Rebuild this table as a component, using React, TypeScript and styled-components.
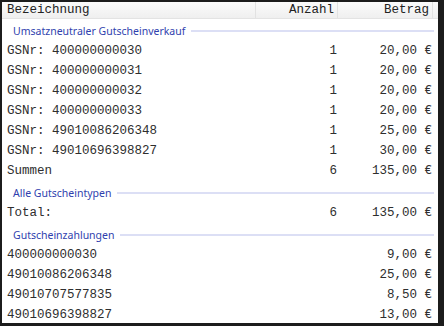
import styled, { createGlobalStyle } from "styled-components";

const GlobalStyle = createGlobalStyle`
  html, body {
    margin: 0;
    padding: 0;
    background: #1c1c1c;
  }
  * {
    box-sizing: border-box;
  }
`;

type Row = { name: string; anzahl?: string; betrag: string };
type Group = { title: string; rows: Row[] };

const groups: Group[] = [
  {
    title: "Umsatzneutraler Gutscheinverkauf",
    rows: [
      { name: "GSNr: 400000000030", anzahl: "1", betrag: "20,00 €" },
      { name: "GSNr: 400000000031", anzahl: "1", betrag: "20,00 €" },
      { name: "GSNr: 400000000032", anzahl: "1", betrag: "20,00 €" },
      { name: "GSNr: 400000000033", anzahl: "1", betrag: "20,00 €" },
      { name: "GSNr: 49010086206348", anzahl: "1", betrag: "25,00 €" },
      { name: "GSNr: 49010696398827", anzahl: "1", betrag: "30,00 €" },
      { name: "Summen", anzahl: "6", betrag: "135,00 €" },
    ],
  },
  {
    title: "Alle Gutscheintypen",
    rows: [{ name: "Total:", anzahl: "6", betrag: "135,00 €" }],
  },
  {
    title: "Gutscheinzahlungen",
    rows: [
      { name: "400000000030", betrag: "9,00 €" },
      { name: "49010086206348", betrag: "25,00 €" },
      { name: "49010707577835", betrag: "8,50 €" },
      { name: "49010696398827", betrag: "13,00 €" },
    ],
  },
];

export default function App() {
  return (
    <>
      <GlobalStyle />
      <Frame>
        <Panel>
          <Header>
            <HeadCell>Bezeichnung</HeadCell>
            <HeadCell $align="right">Anzahl</HeadCell>
            <HeadCell $align="right">Betrag</HeadCell>
            <HeadFiller />
          </Header>
          {groups.map((g) => (
            <section key={g.title}>
              <GroupTitle>
                <span>{g.title}</span>
              </GroupTitle>
              {g.rows.map((r) => (
                <DataRow key={r.name}>
                  <Cell>{r.name}</Cell>
                  <Cell $align="right">{r.anzahl ?? ""}</Cell>
                  <Cell $align="right">{r.betrag}</Cell>
                </DataRow>
              ))}
            </section>
          ))}
        </Panel>
      </Frame>
    </>
  );
}

const Frame = styled.div`
  width: 444px;
  height: 326px;
  background: #1c1c1c;
  padding: 2px 6px 3px 2px;
  overflow: hidden;
`;

const Panel = styled.div`
  width: 100%;
  height: 100%;
  background: #ffffff;
  overflow: hidden;
  font-family: "Liberation Mono", "Courier New", monospace;
  font-size: 12.5px;
  color: #2e2e2e;
`;

const Header = styled.div`
  display: grid;
  grid-template-columns: 254px 82px 95px 1fr;
  height: 17px;
  background: linear-gradient(#fbfbfb, #efefef);
  border-bottom: 1px solid #e3e3e3;
`;

const HeadCell = styled.div<{ $align?: "left" | "right" }>`
  display: flex;
  align-items: center;
  justify-content: ${(p) => (p.$align === "right" ? "flex-end" : "flex-start")};
  padding: ${(p) => (p.$align === "right" ? "0 3px 0 0" : "0 0 0 5px")};
  border-right: 1px solid #e2e2e2;
  color: #222;
  white-space: nowrap;
`;

const HeadFiller = styled.div``;

const GroupTitle = styled.div`
  display: flex;
  align-items: center;
  gap: 6px;
  height: 22px;
  padding: 1px 0 0 11px;
  width: 432px;
  font-family: "Noto Sans", "Open Sans", sans-serif;
  font-size: 10.5px;
  color: #2f3fae;

  &::after {
    content: "";
    flex: 1;
    height: 2px;
    background: #dcdff5;
  }
`;

const DataRow = styled.div`
  display: grid;
  grid-template-columns: 254px 82px 95px;
  height: 20px;
  align-items: center;
`;

const Cell = styled.div<{ $align?: "left" | "right" }>`
  text-align: ${(p) => p.$align ?? "left"};
  padding: ${(p) => (p.$align === "right" ? "0 1px 0 0" : "0 0 0 5px")};
  white-space: nowrap;
`;
